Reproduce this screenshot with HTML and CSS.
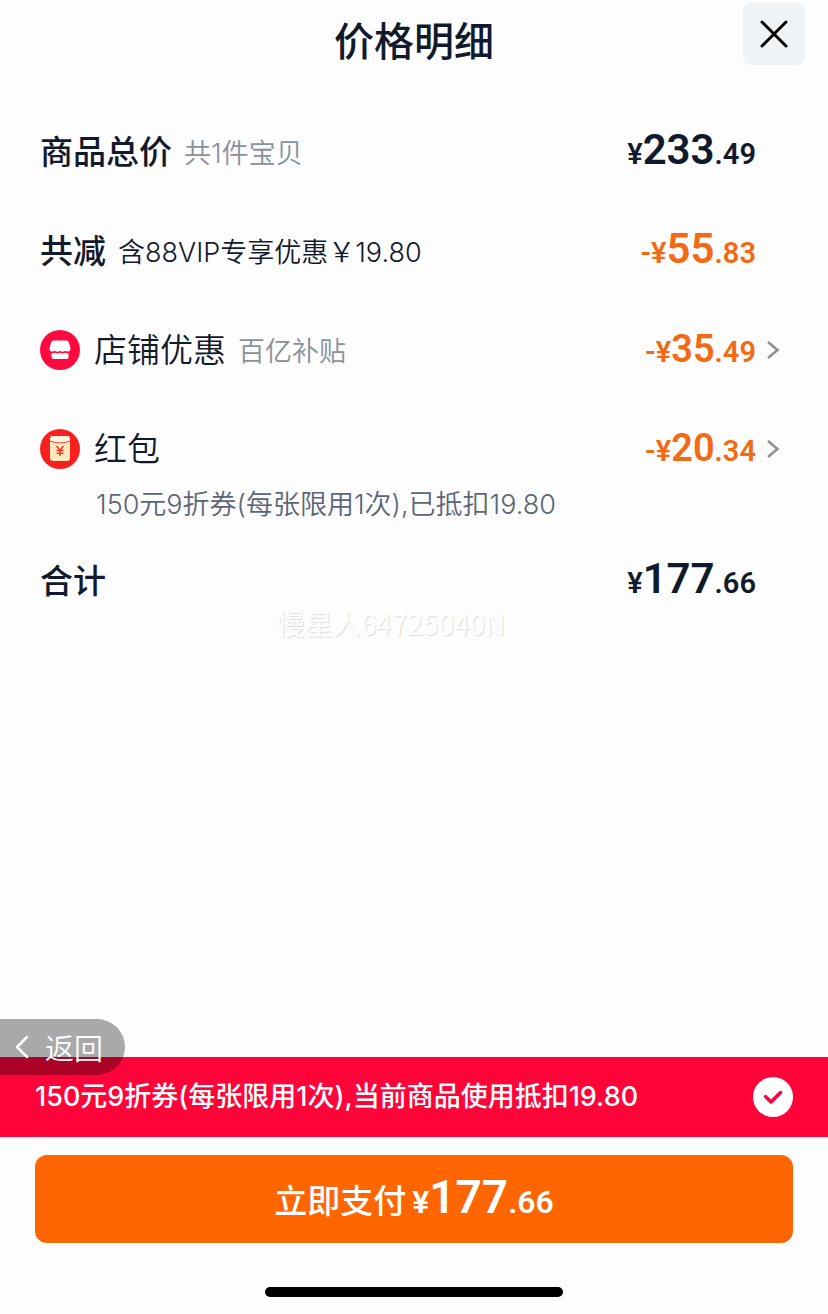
FILE: index.html
```html
<!DOCTYPE html>
<html lang="zh-CN">
<head>
  <meta charset="UTF-8">
  <meta name="viewport" content="width=device-width, initial-scale=1.0">
  <title>价格明细</title>
  <link rel="stylesheet" href="styles.css">
</head>
<body>
  <header class="header">
    <h1>价格明细</h1>
    <button type="button" class="close" aria-label="关闭">
      <svg width="30" height="30" viewBox="0 0 30 30" fill="none" stroke="#000" stroke-width="3" stroke-linecap="round">
        <path d="M3 3l24 24M27 3L3 27"/>
      </svg>
    </button>
  </header>

  <main class="content">
    <ul class="price-list">
      <li>
        <div class="row">
          <span class="name strong">商品总价</span>
          <span class="hint">共1件宝贝</span>
          <span class="price"><small>¥</small>233<small class="cents">.49</small></span>
        </div>
      </li>
      <li>
        <div class="row">
          <span class="name strong">共减</span>
          <span class="hint dark">含88VIP专享优惠￥19.80</span>
          <span class="price orange"><small>-¥</small>55<small class="cents">.83</small></span>
        </div>
      </li>
      <li>
        <button type="button" class="row">
          <svg class="badge" width="40" height="40" viewBox="0 0 40 40">
            <circle cx="20" cy="20" r="20" fill="#ff0a40"/>
            <path d="M13.500 10.500h13q2 0 2.500 2l1.500 6q.3 2.500-2.500 3-1.800.2-2.700-.8-1.100 1-2.700 1t-2.600-1q-1.100 1-2.700 1t-2.700-1q-.9 1-2.600.8-2.800-.5-2.500-3l1.500-6q.5-2 2.500-2z" fill="#fff"/>
            <path d="M11.500 23.300q2 .2 3.400-.6 1.200.8 2.600.8t2.500-.8q1.200.8 2.600.8t2.500-.8q1.400.8 3.400.6v3.700q0 2-2 2h-13q-2 0-2-2z" fill="#fff"/>
          </svg>
          <span class="name">店铺优惠</span>
          <span class="hint">百亿补贴</span>
          <span class="price orange medium"><small>-¥</small>35<small class="cents">.49</small></span>
          <svg class="arrow" width="14" height="20" viewBox="0 0 14 20" fill="none" stroke="#8d8f94" stroke-width="2.500">
            <path d="M2 2l9.500 8L2 18"/>
          </svg>
        </button>
      </li>
      <li class="with-note">
        <button type="button" class="row">
          <svg class="badge" width="40" height="40" viewBox="0 0 40 40">
            <circle cx="20" cy="20" r="20" fill="#fa2020"/>
            <rect x="10" y="7" width="20" height="25" rx="3" fill="#fde9bd"/>
            <path d="M10 12v-2q0-3 3-3h14q3 0 3 3v2q-10 4-20 0z" fill="#fff5dc"/>
            <path d="M10 12q10 4 20 0" fill="none" stroke="#e8443a" stroke-width="1"/>
            <path d="M16.500 17l3.500 4.500 3.500-4.500M20 21.500V27M16.500 21.500h7M16.500 24.300h7" fill="none" stroke="#f03428" stroke-width="1.500"/>
          </svg>
          <span class="name">红包</span>
          <span class="price orange medium"><small>-¥</small>20<small class="cents">.34</small></span>
          <svg class="arrow" width="14" height="20" viewBox="0 0 14 20" fill="none" stroke="#8d8f94" stroke-width="2.500">
            <path d="M2 2l9.500 8L2 18"/>
          </svg>
        </button>
        <p class="note">150元9折券(每张限用1次),已抵扣19.80</p>
      </li>
      <li>
        <div class="row">
          <span class="name strong">合计</span>
          <span class="price"><small>¥</small>177<small class="cents">.66</small></span>
        </div>
      </li>
    </ul>
    <p class="watermark">慢星人64725040N</p>
  </main>

  <footer class="footer">
    <button type="button" class="back">
      <svg width="14" height="24" viewBox="0 0 14 24" fill="none" stroke="#fff" stroke-width="2.500" stroke-linecap="round" stroke-linejoin="round">
        <path d="M12 2L2 12l10 10"/>
      </svg>
      返回
    </button>
    <label class="coupon">
      <span class="coupon-text">150元9折券(每张限用1次),当前商品使用抵扣19.80</span>
      <span class="check">
        <input type="checkbox" checked>
        <svg width="20" height="16" viewBox="0 0 20 16" fill="none" stroke="#f5063f" stroke-width="3.500" stroke-linecap="round" stroke-linejoin="round">
          <path d="M2.500 7.500l5.500 5.500 9.500-9.500"/>
        </svg>
      </span>
    </label>
    <button type="button" class="pay">
      <span>立即支付</span>
      <span class="price large"><small>¥</small>177<small class="cents">.66</small></span>
    </button>
    <div class="home-bar"></div>
  </footer>
</body>
</html>
```

FILE: styles.css
```css
* {
  box-sizing: border-box;
}
body {
  margin: 0;
  min-height: 100vh;
  display: flex;
  flex-direction: column;
  background-color: #fdfdfd;
  color: #111a2c;
  font-family: Inter, "Noto Sans CJK SC", sans-serif;
}
button {
  border: none;
  padding: 0;
  background: none;
  color: inherit;
  font-family: inherit;
  cursor: pointer;
}
.header {
  display: grid;
  grid-template-columns: 62px 1fr 62px;
  align-items: start;
  padding: 3px 23px 0;
}
.header h1 {
  grid-column: 2;
  margin: 0;
  font-size: 40px;
  font-weight: 500;
  line-height: 78px;
  text-align: center;
}
.close {
  display: grid;
  place-items: center;
  height: 62px;
  border-radius: 8px;
  background-color: #f0f3f6;
}
.content {
  flex: 1;
  position: relative;
  padding: 47px 48px 0 40px;
}
.price-list {
  list-style: none;
  margin: 0;
  padding: 0;
}
.price-list li {
  margin-bottom: 51px;
}
.price-list .with-note {
  margin-bottom: 34px;
}
.row {
  display: flex;
  align-items: center;
  width: 100%;
  height: 48px;
  padding-right: 24px;
  text-align: left;
}
button.row {
  padding-right: 0;
}
.badge {
  margin-right: 14px;
}
.name {
  font-size: 33px;
  font-weight: 350;
  line-height: 48px;
}
.strong {
  font-weight: 500;
}
.hint {
  margin-left: 12px;
  padding-top: 4px;
  color: #8a919c;
  font-size: 27px;
  font-weight: 350;
  line-height: 44px;
}
.hint.dark {
  color: #111a2c;
}
.price {
  margin-left: auto;
  font-family: Roboto, sans-serif;
  font-size: 42px;
  font-weight: 600;
  line-height: 48px;
}
.price small {
  font-size: 29px;
}
.price.medium {
  font-size: 38px;
}
.price.large {
  margin-left: 6px;
  font-size: 46px;
}
.price.large small {
  font-size: 32px;
}
.orange {
  color: #f26a14;
}
.arrow {
  margin-left: 10px;
}
.note {
  margin: 14px 0 0 56px;
  color: #5b6578;
  font-size: 27px;
  font-weight: 350;
  line-height: 36px;
}
.watermark {
  position: absolute;
  top: 522px;
  left: 0;
  right: 46px;
  margin: 0;
  color: #fff;
  font-family: "Noto Sans CJK SC", sans-serif;
  font-size: 28px;
  line-height: 40px;
  text-align: center;
  text-shadow: 1px 1px 1px #dcdcdc;
}
.footer {
  position: relative;
}
.back {
  position: absolute;
  top: -38px;
  left: 0;
  display: flex;
  align-items: center;
  gap: 16px;
  height: 56px;
  padding: 0 22px 0 15px;
  border-radius: 0 28px 28px 0;
  background-color: rgba(0, 0, 0, 0.33);
  color: #fff;
  font-size: 29px;
  font-weight: 350;
}
.coupon {
  display: flex;
  align-items: center;
  justify-content: space-between;
  height: 80px;
  padding: 0 35px;
  background-color: #ff0439;
  color: #fff;
  font-size: 27px;
  font-weight: 500;
}
.coupon-text {
  padding-bottom: 6px;
}
.check {
  display: grid;
  place-items: center;
}
.check input,
.check svg {
  grid-area: 1 / 1;
}
.check input {
  appearance: none;
  width: 40px;
  height: 40px;
  margin: 0;
  border-radius: 50%;
  background-color: #fff;
}
.check svg {
  pointer-events: none;
  visibility: hidden;
}
.check input:checked + svg {
  visibility: visible;
}
.pay {
  display: flex;
  align-items: center;
  justify-content: center;
  width: calc(100% - 70px);
  height: 88px;
  margin: 18px 35px 44px;
  border-radius: 12px;
  background-color: #ff6600;
  color: #fff;
  font-size: 33px;
  font-weight: 500;
}
.home-bar {
  width: 36%;
  height: 10px;
  margin: 0 auto 17px;
  border-radius: 5px;
  background-color: #000;
}
```
